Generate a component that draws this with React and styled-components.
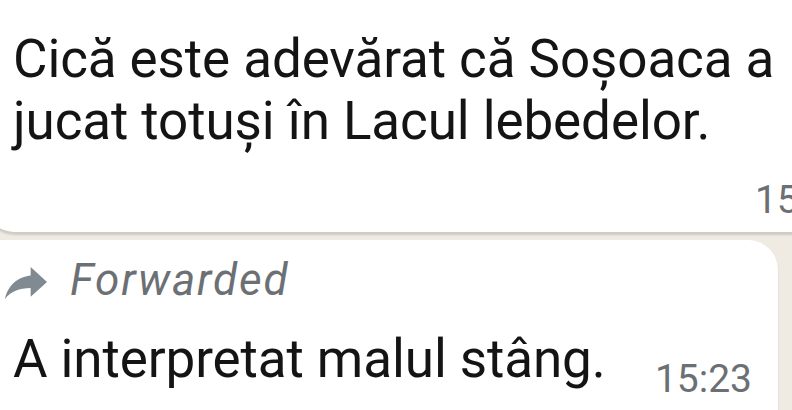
import React from "react";
import styled, { createGlobalStyle } from "styled-components";

const Global = createGlobalStyle`
  html, body { margin: 0; padding: 0; }
  body {
    width: 792px;
    height: 410px;
    overflow: hidden;
    background: #efeae2;
    font-family: Roboto, "Noto Sans", "Liberation Sans", sans-serif;
  }
`;

const Page = styled.div`
  width: 792px;
  height: 410px;
  overflow: hidden;
  display: flex;
  flex-direction: column;
  gap: 8px;
  background: #efeae2;
`;

const Bubble = styled.div`
  flex: none;
  margin-left: -14px;
  width: ${(p) => p.$width}px;
  box-sizing: border-box;
  background: #ffffff;
  border-radius: ${(p) => p.$radius};
  padding: ${(p) => p.$padding};
  box-shadow: 0 3px 2px rgba(11, 20, 26, 0.14);
  display: flex;
  flex-direction: column;
`;

const MessageText = styled.div`
  font-size: 53px;
  line-height: 62px;
  color: #141414;
  letter-spacing: -0.1px;
  white-space: nowrap;
`;

const Time = styled.span`
  font-size: 39px;
  line-height: 40px;
  color: #6b7074;
  white-space: nowrap;
`;

const MetaRow = styled.div`
  display: flex;
  justify-content: flex-end;
  margin-top: ${(p) => p.$top}px;
`;

const ForwardRow = styled.div`
  display: flex;
  align-items: center;
  gap: 23px;
  margin-left: -8px;
  height: 52px;
`;

const ForwardIcon = styled.svg`
  width: 42px;
  height: 32px;
  margin-top: 6px;
  fill: #7f8a93;
  flex: none;
`;

const ForwardLabel = styled.span`
  font-size: 44px;
  line-height: 52px;
  font-style: italic;
  letter-spacing: 1.9px;
  color: #6c7075;
`;

const LastRow = styled.div`
  display: flex;
  align-items: flex-start;
  margin-top: 22px;
`;

const InlineTime = styled(Time)`
  margin-left: auto;
  margin-top: 31px;
`;

export default function App() {
  return (
    <>
      <Global />
      <Page>
        <Bubble $width={892} $radius="0 0 28px 28px" $padding="28px 26px 12px 27px">
          <MessageText>Cică este adevărat că Soșoaca a</MessageText>
          <MessageText>jucat totuși în Lacul lebedelor.</MessageText>
          <MetaRow $top={28}>
            <Time>15:22</Time>
          </MetaRow>
        </Bubble>
        <Bubble $width={792} $radius="0 30px 0 0" $padding="14px 26px 20px 27px">
          <ForwardRow>
            <ForwardIcon viewBox="3 5 18 15" preserveAspectRatio="none">
              <path d="M14 9V5l7 7-7 7v-4.1c-5 0-8.5 1.6-11 5.1 1-5 4-10 11-11z" />
            </ForwardIcon>
            <ForwardLabel>Forwarded</ForwardLabel>
          </ForwardRow>
          <LastRow>
            <MessageText>A interpretat malul stâng.</MessageText>
            <InlineTime>15:23</InlineTime>
          </LastRow>
        </Bubble>
      </Page>
    </>
  );
}
